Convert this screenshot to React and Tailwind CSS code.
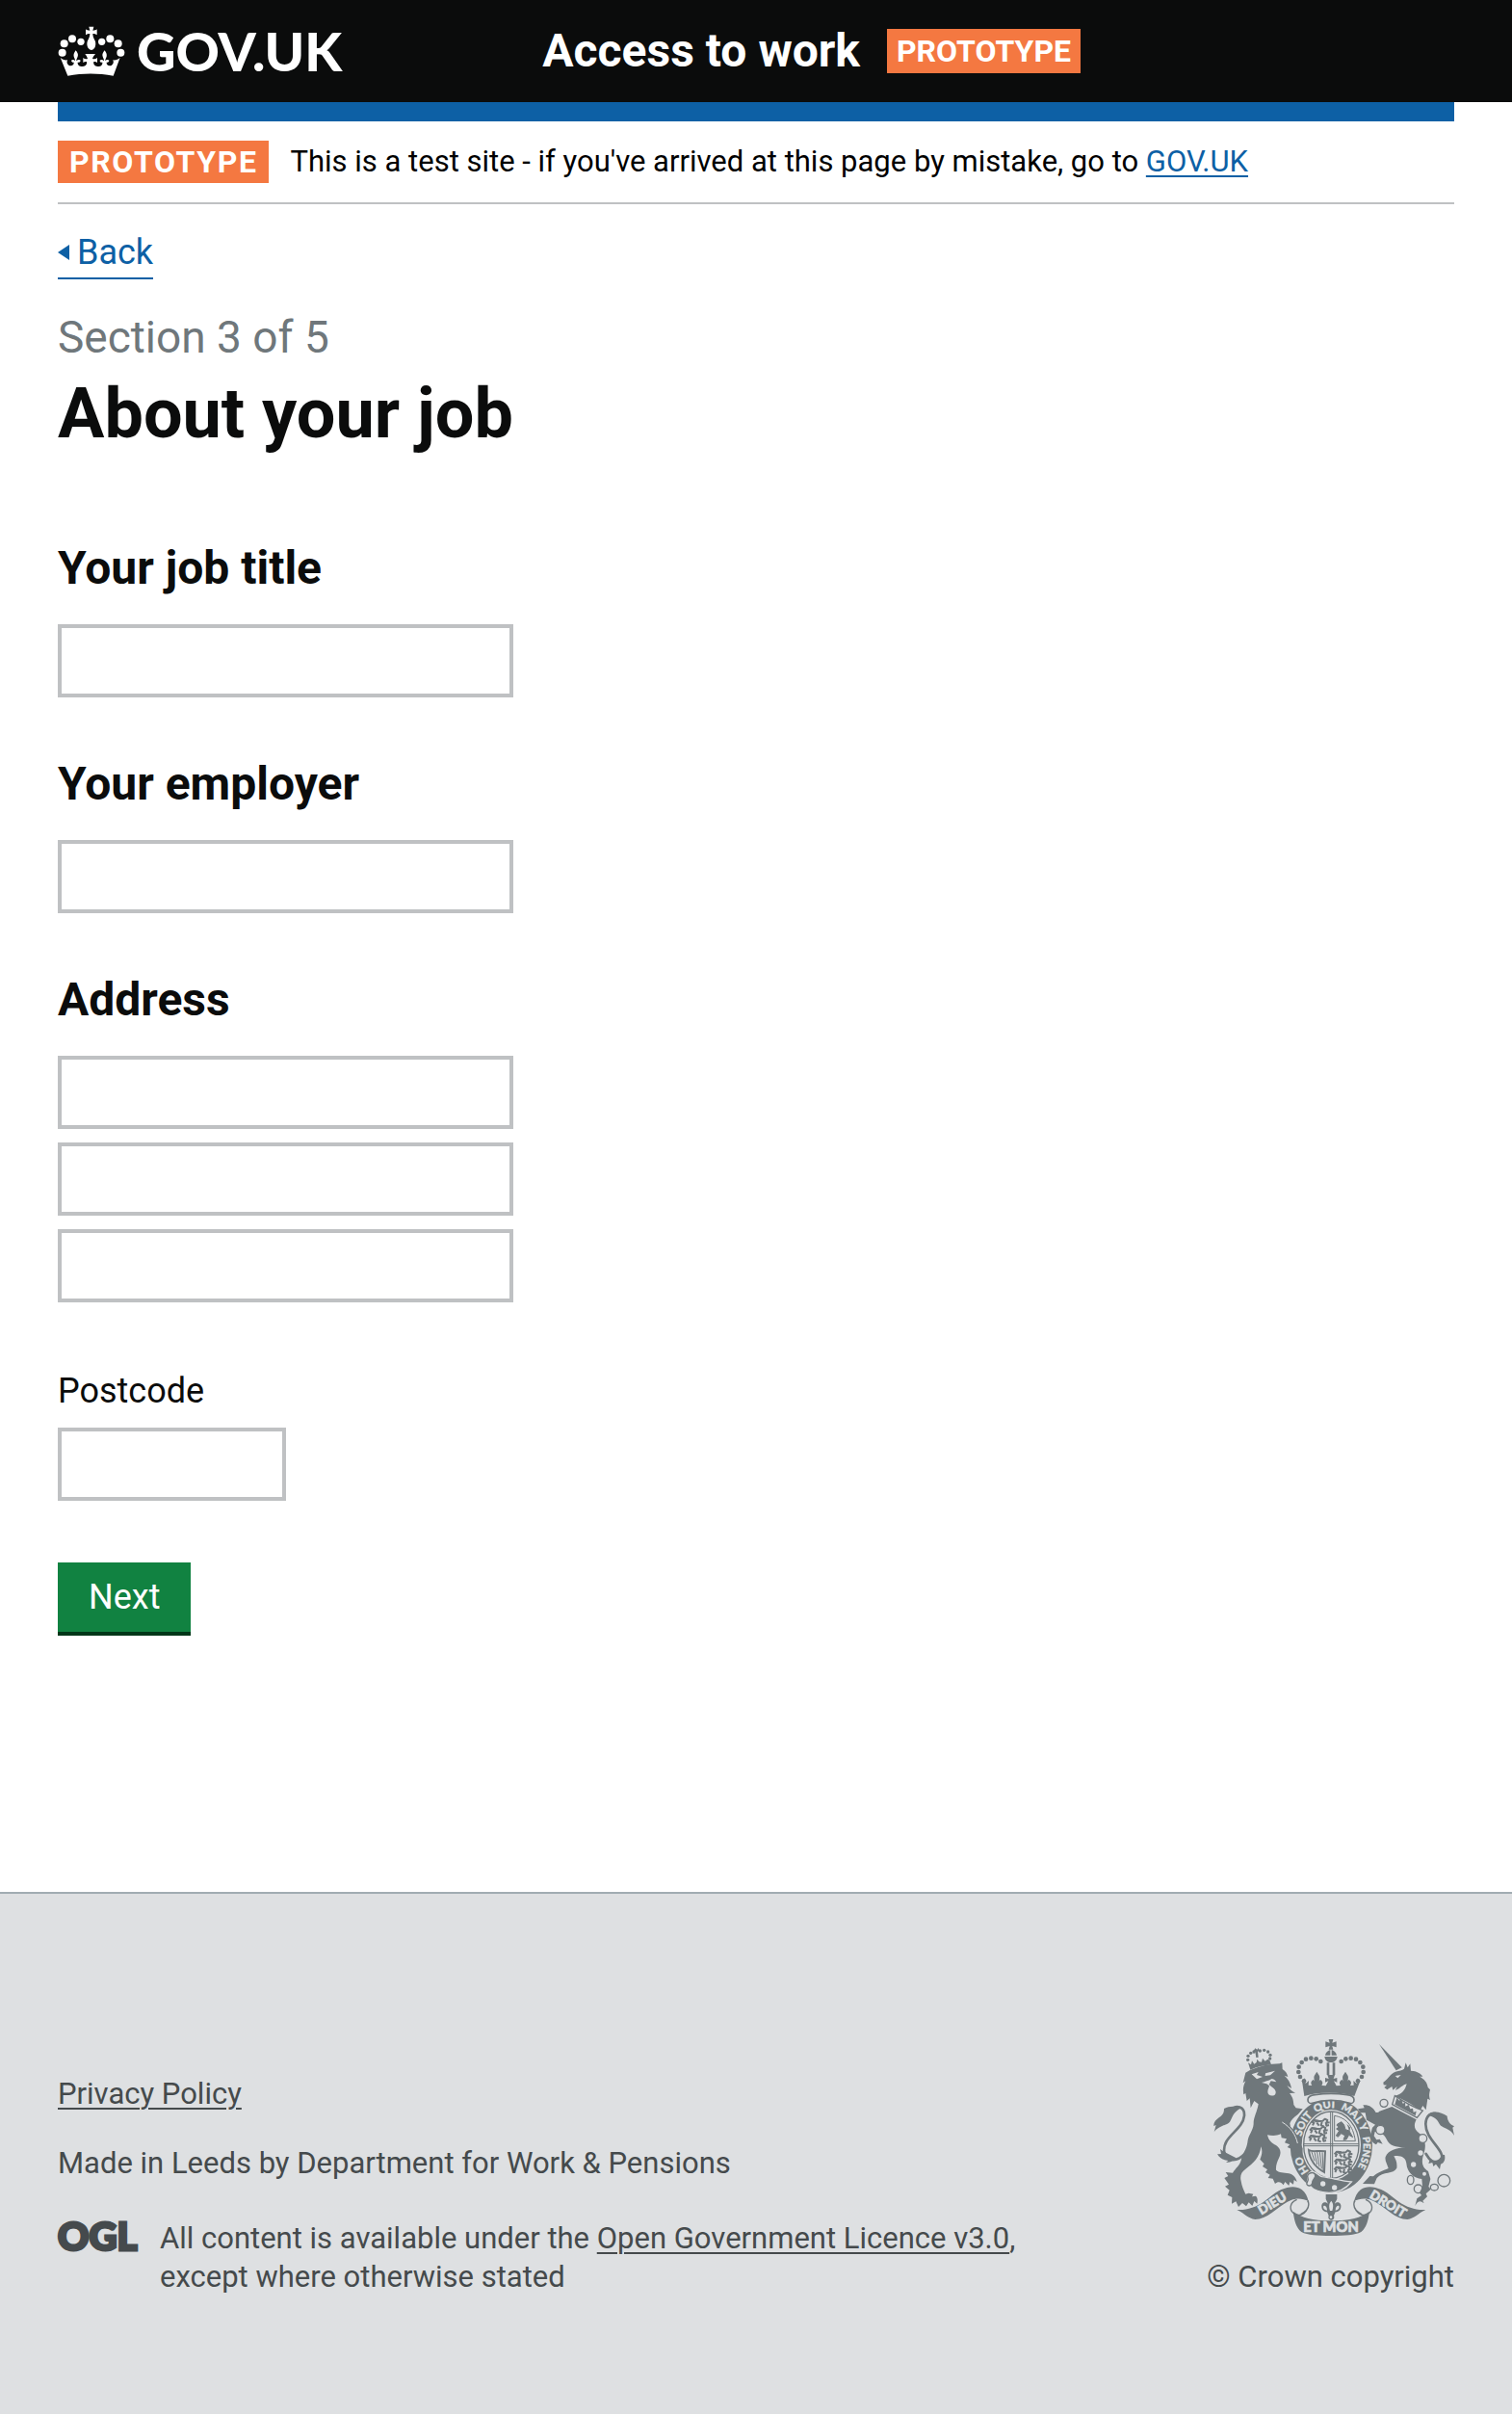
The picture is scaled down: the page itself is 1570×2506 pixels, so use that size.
import React from 'react';

const GREY = '#6f777b';
const PALE = '#dee0e2';

function HeaderCrown() {
  return (
    <svg viewBox="30 30 210 156" className="h-[52px] w-[70px] shrink-0" fill="#fff" aria-hidden="true">
      <path d="M127 32h15l-3 12c6 0 9-1 13-4v18c-4-3-7-4-13-4 0 8 3 14 7 22 4 10 2 27-11 29-14-2-16-19-12-29 4-8 7-14 7-22-6 0-9 1-13 4V40c4 3 7 4 13 4z" />
      <circle cx="102" cy="79" r="11" />
      <circle cx="75" cy="70" r="12" />
      <circle cx="50" cy="85" r="12" />
      <circle cx="44" cy="113" r="12" />
      <circle cx="167" cy="79" r="11" />
      <circle cx="193" cy="70" r="12" />
      <circle cx="218" cy="85" r="12" />
      <circle cx="226" cy="113" r="12" />
      <path d="M38 128c6 6 13 9 22 8-3 7-1 13 5 17 9 3 16-2 15-10-4 1-7-1-8-6 5-3 9-2 12 2 0-6-2-9-4-14-2-7 2-13 6-19 5 6 9 13 6 19-2 5-4 8-4 14 4-4 9-5 13-2-1 5-4 7-9 6-1 9 7 14 16 13 9-1 14-7 12-15-4-1-8 0-11 3v-15c4 4 9 5 14 3-2-6-4-10-8-15h32c-4 5-7 9-9 15 6 2 10 1 15-3v15c-3-3-7-4-11-3-2 8 3 14 12 15 9 1 16-4 15-13-5 1-8-1-8-6 4-3 9-2 13 2 0-6-2-9-4-14-3-6 1-13 6-19 4 6 8 12 6 19-2 5-4 8-4 14 3-4 7-5 12-2-1 5-4 7-8 6-1 8 6 13 15 10 6-4 8-10 5-17 9 1 16-2 22-8l-21 57c-47-9-95-9-142 0z" />
    </svg>
  );
}

function OglLogo() {
  return (
    <svg
      viewBox="0 0 82 34"
      className="h-[34px] w-[82px] shrink-0 overflow-visible"
      fill="#454a4d"
      stroke="#454a4d"
      strokeWidth="3"
      fontFamily="Lato, sans-serif"
      fontWeight="900"
      fontSize="40"
      role="img"
      aria-label="OGL"
    >
      <text x="0" y="32">OGL</text>
    </svg>
  );
}

const ARCH_BEADS = [
  [372, 178], [360, 165], [355, 150], [356, 134], [365, 120], [378, 110], [394, 107], [410, 109], [424, 117],
];

function CrestCrown() {
  return (
    <g>
      <path d="M449 48h14l-3 11 13-4v18l-13-4 3 11h-14l3-11-13 4V55l13 4z" />
      <path d="M438 98c2-9 8-15 16-17v17zM458 81c8 2 14 8 16 17h-16zM436 102h40c-2 12-10 18-20 18s-18-6-20-18z" />
      <path d="M443 121h8v38h-8zM461 121h8v38h-8z" />
      {ARCH_BEADS.map(([x, y]) => (
        <g key={`${x}-${y}`}>
          <circle cx={x} cy={y} r="7" />
          <circle cx={912 - x} cy={y} r="7" />
        </g>
      ))}
      <path d="M366 178l8-9 3 17 10-9-1 14 11 1c-6-8-2-15 4-18 3 2 4 5 4 8-1-10-3-14-1-20l8-13 8 13c2 6 0 10-1 20 0-3 1-6 4-8 6 3 10 10 4 18l13 1 8-15-10 4v-14l11 3-4-12h23l-4 12 11-3v14l-10-4 8 15 13-1c-6-8-2-15 4-18 3 2 4 5 4 8-1-10-3-14-1-20l8-13 8 13c2 6 0 10-1 20 0-3 1-6 4-8 6 3 10 10 4 18l11-1-1-14 10 9 3-17 8 9-18 47c-44-14-112-14-156 0z" />
      <path d="M384 236c0-9 8-13 22-15 34-5 66-5 100 0 14 2 22 6 22 15 0 7-5 12-11 12-38-12-84-12-122 0-6 0-11-5-11-12z" fill={PALE} stroke={GREY} strokeWidth="5" />
    </g>
  );
}

function Lion() {
  return (
    <g>
      <g>
        {[[197, 112], [198, 100], [206, 91], [216, 87], [235, 84], [248, 82], [260, 87], [267, 97], [266, 108]].map(([x, y]) => (
          <circle key={`${x}-${y}`} cx={x} cy={y} r="5" />
        ))}
        <path d="M220 76l6 4 4-5 3 8-5 3 2 18-7 1-3-18-5-3z" />
        <path d="M198 121l9 6 3-12 7 10 7-5 2-10 6 8 8 1 3-12 8 9 8-6 6 3 5 14c-22 2-44 7-65 16z" />
      </g>
      <path d="M190 152L204 144C234 132 266 124 296 124L304 121 305 141C315 148 320 155 322 165L311 161C324 173 330 184 333 201L319 192C329 206 336 210 345 215L327 216C336 227 339 236 340 252L347 262 368 265 353 282C340 292 332 298 328 310L330 320C345 335 355 350 358 368L368 388 367 405 358 396 354 408 346 398 338 406 334 390 320 384 328 376 312 370 318 358 302 355 300 343C285 350 270 348 258 346C262 364 272 372 285 378C300 388 302 402 294 418C288 430 284 442 285 455C294 464 308 463 325 466C340 470 347 480 350 492L341 486 339 500 328 492 325 504 313 492 308 502C300 490 290 490 282 498L275 482 260 480 266 470 252 462 258 454 243 444 248 436 235 422C240 410 244 398 238 382C234 416 215 434 190 452C176 462 172 474 176 490C178 504 184 518 190 530L200 527 214 530 210 538 222 536C228 542 228 550 226 560L217 552 211 567 200 556 192 568 180 558 168 570 160 553 147 560 148 540 134 533 140 518 126 506 138 500 124 480 136 474 128 462 150 464C160 448 172 440 176 425C180 404 193 392 196 370C198 345 213 335 215 312C214 292 226 275 230 250L217 240 206 262 203 232 194 240 190 216 184 220C181 204 183 192 190 178L182 184z" />
      <path d="M304 306C330 322 346 344 352 372" fill="none" stroke={PALE} strokeWidth="3" />
      <path d="M209 157l21-7-5 9 18 6-18 7zM252 154l30-8-15 14-16 2z" fill={PALE} />
      <path d="M240 183c11-4 20-5 32-12 8 2 11 5 14 10l-17-3-6 11 8 7c12 7 17 18 10 25-10 6-22 1-22-9 0-8 4-12 5-19l-8-6z" fill={PALE} />
      <path d="M188 404c-23 26-56 26-64-3-9-50 57-68 62-115 2-29-25-35-42-18" fill="none" stroke={GREY} strokeWidth="8" strokeLinecap="round" />
      <path d="M177 262c-21-7-38-6-54 2 0 14-4 20-15 27-11 8-18 16-17 27l7-3-6 22c14-20 40-21 49-32 10-15 7-28 36-43z" />
      <path d="M120 397l-9-7 3 15-12 1c8 15 22 18 34 20l-7 6c18-1 24-5 32-14z" />
    </g>
  );
}

function Unicorn() {
  return (
    <g>
      <path d="M606 63l71 73-18 9z" />
      <path d="M619 182c17-12 20-26 38-33 13-3 21-4 27-9l5-19 6 15 8-12 2 22c19 1 31 8 37 18h-10c15 8 24 18 26 34l7 7c-3 14-4 19 0 32l-8-4-5 35-10-13-8 15c-25-20-57-37-80-45 24-7 33-18 38-38-12 2-19 14-35 20l5-12-13 11-3-11-15 10-9-7 8-7-10-1z" />
      <path d="M656 162l18-3-10 10z" fill={PALE} />
      <path d="M655 224l-8 27 77 41 18-22c-29-11-58-26-87-46z" fill={PALE} stroke={GREY} strokeWidth="4" />
      <path d="M661 230l8 9 6-5 5 14 7-3 1 12 10-5 5 13 8-2 2 12 9-3-3 14-64-35z" />
      <path d="M646 258l76 40c-8 17-8 28 7 41 20 15 25 38 17 63-9 26-8 43 13 57l7 24-6 24 7 8-15 14 4 9-14 13 4 8c-12-9-18-10-28 8l6-23 14-10-6-8 9-19-2-24c-24-2-46-20-48-49-2-18-18-26-39-22 6 10 11 20 9 37-10 20-43 9-62 31l-8 19-36-1 22-24 11 1c11-12 29-17 47-25-4-14-12-25-9-36 9-21 34-27 62-29-31 0-50-6-58-24-5-14-17-23-37-25l-3 13 8 12 10-2 9 15-15-5-5 7c-13-6-15-15-20-23l8-30 9-9-27-15-4-22-15 0-8-12 20-3-4-9c21-1 29 7 41 23z" />
      <path d="M752 405c10 18 28 36 46 23 21-32-48-65-47-116 1-27 17-38 37-31" fill="none" stroke={GREY} strokeWidth="8" strokeLinecap="round" />
      <path d="M757 285c15-17 42-10 61 2 1 17 10 26 22 32l-5 4 5 25c-11-20-27-20-39-29-14-10-6-26-44-34z" />
      <path d="M764 423l-4 12 12-3 3 12 8-7 12 16 3-16c12-4 15-17 12-29l-9-1c-6 18-17 21-37 16z" />
      <g fill="none" stroke={GREY} strokeWidth="4">
        <circle cx="621" cy="247" r="12" />
        <circle cx="610" cy="330" r="14" fill={PALE} />
        <circle cx="742" cy="357" r="13" fill={PALE} />
        <ellipse cx="704" cy="486" rx="10" ry="14" />
        <circle cx="728" cy="514" r="13" />
        <ellipse cx="778" cy="509" rx="12" ry="10" />
        <circle cx="808" cy="488" r="19" />
      </g>
      <circle cx="600" cy="269" r="7" fill={PALE} />
      <circle cx="735" cy="402" r="8" fill={PALE} />
      <circle cx="713" cy="438" r="8" fill={PALE} />
      <circle cx="747" cy="467" r="6" fill={PALE} />
    </g>
  );
}

const PASSANT = 'M0 10l7-8 8 4 20-2 6-6 8 4-3 8 10-1M8 8l-5 10M16 10l7 9M32 8l-3 10 9 3M44 8l2 11 8-2M10 2l12 2';

function Shield() {
  return (
    <g>
      <ellipse cx="457" cy="379" rx="131" ry="150" fill={PALE} />
      <ellipse cx="457" cy="379" rx="128" ry="147" />
      <ellipse cx="457" cy="377" rx="92" ry="110" fill={PALE} />
      <ellipse cx="457" cy="377" rx="86" ry="104" fill="none" stroke={GREY} strokeWidth="4" />
      <path d="M455 274v206M461 274v206M371 374h172M371 380h172" stroke={GREY} strokeWidth="3" />
      <g fill="none" stroke={GREY} strokeWidth="6" strokeLinejoin="round">
        {[[396, 298], [390, 322], [387, 346], [467, 396], [467, 420], [466, 444]].map(([x, y]) => (
          <path key={`${x}-${y}`} d={PASSANT} transform={`translate(${x} ${y})`} />
        ))}
      </g>
      <path d="M467 286c34 6 58 28 65 79h-65z" fill="none" stroke={GREY} strokeWidth="3" />
      <path d="M476 312l13-7 8 10 4 14 12 4 11 20-12-7-8 14-9 1 5-13-12-7-10 11-6-4 10-15-9-6 8-6-7-5zM507 314l8 9-2 10" stroke={GREY} strokeWidth="3" />
      <g fill="none" stroke={GREY}>
        <path d="M387 393c13 8 28 0 51 4l-3 65c-23-13-45-35-48-69z" strokeWidth="6" />
        <path d="M396 399l9 28M405 400l8 38M413 399l7 46M421 399l6 52M429 400l3 57" strokeWidth="3" />
      </g>
    </g>
  );
}

function Garter() {
  return (
    <g>
      <path id="garter" d="M390 462A98 117 0 1 1 505 482" fill="none" />
      <g fill={PALE} stroke={PALE} strokeWidth="1" fontFamily="Lato, sans-serif" fontWeight="900" fontSize="33">
        <text><textPath href="#garter" startOffset="4">HO</textPath></text>
        <text><textPath href="#garter" startOffset="118">SOIT</textPath></text>
        <text><textPath href="#garter" startOffset="206">QUI</textPath></text>
        <text><textPath href="#garter" startOffset="286">MAL Y</textPath></text>
        <text fontSize="31"><textPath href="#garter" startOffset="402">PENSE</textPath></text>
      </g>
      <path d="M384 482c-4-14 8-25 20-20 12 3 14 12 24 14 32 4 60 14 92 16-20 24-46 34-70 34-28-1-48-8-58-20-9-4-11-14-8-24z" stroke={PALE} strokeWidth="4" />
      <path d="M384 480c-5-13 14-22 22-12 7 10-8 16-8 26 0 9-12 14-17 6-3-6 7-10 3-20z" fill={PALE} stroke={GREY} strokeWidth="4" />
      <circle cx="431" cy="498" r="8" fill={PALE} />
      <circle cx="467" cy="510" r="8" fill={PALE} />
    </g>
  );
}

function RibbonSide() {
  return (
    <g>
      <path d="M163 579c40 3 76-16 105-41 28-25 71-40 97-22 12 9 17 21 21 36-16-8-37-11-54-3-37 14-71 60-112 60-22-3-32-18-57-30z" />
      <path d="M384 550c8 20-7 35-22 43M350 547c-22 8-26 32-9 44 14 8 27 5 38-9 9-12 9-23 4-31" fill="none" stroke={GREY} strokeWidth="4" />
    </g>
  );
}

function Motto() {
  return (
    <g>
      <RibbonSide />
      <g transform="translate(914 0) scale(-1 1)">
        <RibbonSide />
      </g>
      <path d="M338 584c28 20 58 29 119 29s91-9 119-29c-4 30-9 49-26 64-20 10-50 12-93 12s-73-2-93-12c-17-15-22-34-26-64z" />
      <path d="M440 531h35v14c-2 6-6 8-7 15 7-8 17-5 19 5 1 12-5 20-17 21l-5 11c3 9-1 14-8 14s-11-5-8-14l-5-11c-12-1-18-9-17-21 2-10 12-13 19-5-1-7-4-9-6-15z" />
      <path d="M457 551c8 10 6 20 3 31h-7c-3-11-5-21 4-31zM433 567c6-4 11 4 11 14-8-1-14-7-11-14zM481 567c-6-4-11 4-11 14 8-1 14-7 11-14z" fill={PALE} />
      <circle cx="456" cy="602" r="4" fill={PALE} />
      <g fill={PALE} stroke={PALE} strokeWidth="2" fontFamily="Lato, sans-serif" fontWeight="900" textAnchor="middle">
        <text x="456" y="649" fontSize="44">ET MON</text>
        <text transform="translate(280 571) rotate(-31)" fontSize="40">DIEU</text>
        <text transform="translate(627 572) rotate(31)" fontSize="40">DROIT</text>
      </g>
    </g>
  );
}

function Crest() {
  return (
    <svg viewBox="90 45 750 618" className="h-[206px] w-[250px]" fill={GREY} role="img" aria-label="Royal coat of arms">
      <Shield />
      <Garter />
      <CrestCrown />
      <Lion />
      <Unicorn />
      <Motto />
    </svg>
  );
}

const inputClass = 'block h-[76px] max-w-full border-4 border-[#bfc1c3] bg-white px-3 text-4xl outline-none focus:border-[#ffbf47]';

function Field({ id, label }) {
  return (
    <div className="flex flex-col gap-7">
      <label htmlFor={id} className="text-5xl/[60px] font-bold">{label}</label>
      <input id={id} name={id} type="text" className={`${inputClass} w-[473px]`} />
    </div>
  );
}

export default function App() {
  return (
    <div className="flex min-h-screen flex-col bg-white font-[Roboto,sans-serif] text-[#0b0c0c]">
      <header className="bg-[#0b0c0c] px-[60px] text-white">
        <div className="grid min-h-[106px] grid-cols-3 items-center">
          <a href="#home" className="flex items-center gap-3 font-[Lato,sans-serif] text-[56px]/[56px] font-black">
            <HeaderCrown />
            GOV.UK
          </a>
          <div className="col-span-2 flex items-center gap-7 pl-5">
            <a href="#service" className="text-5xl/[60px] font-bold">Access to work</a>
            <strong className="bg-[#f47841] px-[10px] text-[32px]/[46px] font-bold">PROTOTYPE</strong>
          </div>
        </div>
      </header>

      <main className="px-[60px]">
        <div className="h-5 bg-[#0d60a5]" />
        <div className="flex items-center gap-[22px] border-b-2 border-[#bfc1c3] py-5">
          <strong className="bg-[#f47841] px-3 text-[32px]/[44px] font-bold tracking-wider text-white">PROTOTYPE</strong>
          <p className="text-[31px]/[40px] text-black">
            This is a test site - if you've arrived at this page by mistake, go to{' '}
            <a href="#govuk" className="text-[#0d60a5] underline decoration-2 underline-offset-4">GOV.UK</a>
          </p>
        </div>

        <a href="#back" className="mt-[30px] inline-flex items-center gap-2 border-b-2 border-[#0d60a5] pb-[6px] text-4xl/[40px] text-[#0d60a5]">
          <svg viewBox="0 0 12 16" className="h-4 w-3" fill="currentColor" aria-hidden="true">
            <path d="M12 0v16L0 8z" />
          </svg>
          Back
        </a>

        <h1 className="mt-[30px] flex flex-col gap-2 text-7xl/[84px] font-bold">
          <span className="text-[46px]/[60px] font-normal text-[#6f777b]">Section 3 of 5</span>
          About your job
        </h1>

        <form className="mt-[88px] flex flex-col items-start" onSubmit={(e) => e.preventDefault()}>
          <div className="flex flex-col gap-[60px]">
            <Field id="job-title" label="Your job title" />
            <Field id="employer" label="Your employer" />
            <div className="flex flex-col gap-[14px]">
              <Field id="address-1" label="Address" />
              <input aria-label="Address line 2" name="address-2" type="text" className={`${inputClass} w-[473px]`} />
              <input aria-label="Address line 3" name="address-3" type="text" className={`${inputClass} w-[473px]`} />
            </div>
          </div>
          <div className="mt-[72px] flex flex-col gap-[18px]">
            <label htmlFor="postcode" className="text-4xl/[40px]">Postcode</label>
            <input id="postcode" name="postcode" type="text" className={`${inputClass} w-[237px]`} />
          </div>
          <button type="submit" className="mt-16 h-[76px] border-b-4 border-[#003618] bg-[#118241] px-8 text-4xl text-white">
            Next
          </button>
        </form>
      </main>

      <footer className="mt-[266px] flex grow items-end justify-between gap-10 border-t-2 border-[#a1acb2] bg-[#dee0e2] px-[60px] pt-[148px] pb-[122px] text-[31px]/[40px] text-[#454a4c]">
        <div>
          <p><a href="#privacy" className="underline decoration-2 underline-offset-4">Privacy Policy</a></p>
          <p className="mt-8">Made in Leeds by Department for Work &amp; Pensions</p>
          <div className="mt-[38px] flex items-start gap-6">
            <OglLogo />
            <p>
              All content is available under the{' '}
              <a href="#licence" className="underline decoration-2 underline-offset-4">Open Government Licence v3.0</a>,
              <br />
              except where otherwise stated
            </p>
          </div>
        </div>
        <a href="#copyright" className="flex shrink-0 flex-col items-end gap-[22px]">
          <Crest />
          © Crown copyright
        </a>
      </footer>
    </div>
  );
}
